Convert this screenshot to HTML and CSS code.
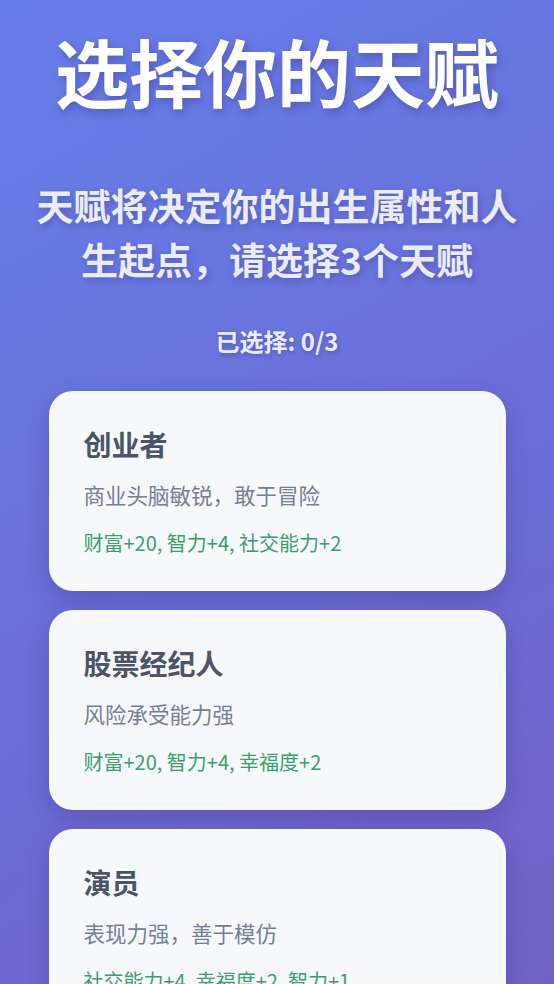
FILE: index.html
```html
<!DOCTYPE html>
<html lang="zh-CN">
<head>
<meta charset="utf-8">
<title>选择你的天赋</title>
<link rel="stylesheet" href="styles.css">
</head>
<body>
<main class="page">
  <h1 class="title">选择你的天赋</h1>
  <p class="subtitle">天赋将决定你的出生属性和人生起点，请选择3个天赋</p>
  <p class="counter">已选择: 0/3</p>
  <section class="list">
    <div class="card">
      <h2 class="card-title">创业者</h2>
      <p class="card-desc">商业头脑敏锐，敢于冒险</p>
      <p class="card-stats">财富+20, 智力+4, 社交能力+2</p>
    </div>
    <div class="card">
      <h2 class="card-title">股票经纪人</h2>
      <p class="card-desc">风险承受能力强</p>
      <p class="card-stats">财富+20, 智力+4, 幸福度+2</p>
    </div>
    <div class="card">
      <h2 class="card-title">演员</h2>
      <p class="card-desc">表现力强，善于模仿</p>
      <p class="card-stats">社交能力+4, 幸福度+2, 智力+1</p>
    </div>
  </section>
</main>
</body>
</html>
```

FILE: styles.css
```css
html, body {
  margin: 0;
  padding: 0;
}
body {
  height: 984px;
  overflow: hidden;
  background: linear-gradient(150deg, #667eea 0%, #6a70d8 50%, #7262c6 100%);
  font-family: "Noto Sans CJK SC", "Noto Sans", sans-serif;
}
.page {
  display: flex;
  flex-direction: column;
  align-items: center;
  padding: 25px 0 0;
}
.title {
  margin: 0;
  font-size: 74px;
  line-height: 90px;
  font-weight: 700;
  color: #ffffff;
  text-shadow: 2px 4px 8px rgba(40, 40, 110, 0.35);
}
.subtitle {
  margin: 63px 0 0;
  width: 500px;
  text-align: center;
  font-size: 37px;
  line-height: 54px;
  font-weight: 700;
  color: rgba(255, 255, 255, 0.88);
  text-shadow: 2px 3px 6px rgba(40, 40, 110, 0.3);
}
.counter {
  margin: 38px 0 0;
  font-size: 24px;
  line-height: 34px;
  font-weight: 700;
  color: rgba(255, 255, 255, 0.9);
  text-shadow: 1px 2px 4px rgba(40, 40, 110, 0.3);
}
.list {
  margin-top: 33px;
  display: flex;
  flex-direction: column;
  gap: 19px;
  width: 457px;
}
.card {
  background: #f7f8fc;
  border-radius: 24px;
  padding: 35px 35px 33px;
  box-shadow: 0 8px 22px rgba(50, 40, 120, 0.3);
}
.card-title {
  margin: 0 0 18px;
  font-size: 28px;
  line-height: 36px;
  font-weight: 700;
  color: #4a5568;
}
.card-desc {
  margin: 0 0 18px;
  font-size: 21.5px;
  line-height: 30px;
  color: #718096;
}
.card-stats {
  margin: 0;
  font-size: 20px;
  line-height: 30px;
  color: #38a169;
}
```
